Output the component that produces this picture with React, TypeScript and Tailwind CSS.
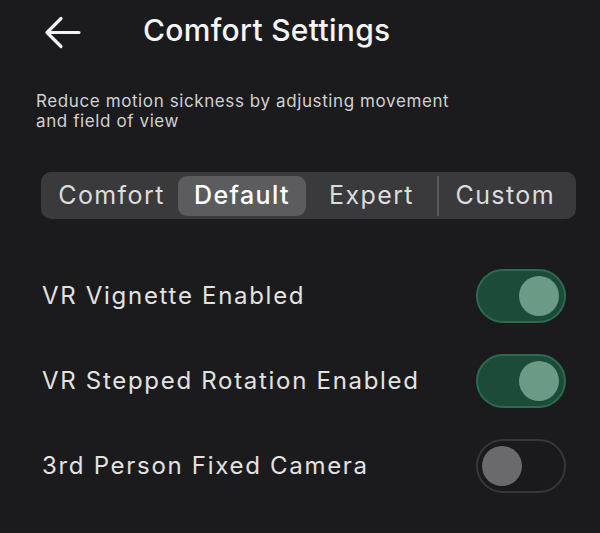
import React from "react";

function Toggle({ on }: { on: boolean }) {
  return (
    <div
      className={
        on
          ? "w-[90px] h-[54px] rounded-full bg-[#1c4c39] border-2 border-[#2e6a51] flex items-center justify-end pr-[5px]"
          : "w-[90px] h-[54px] rounded-full bg-[#1a1a1c] border-2 border-[#37373a] flex items-center justify-start pl-[4px]"
      }
    >
      <div
        className={
          on
            ? "w-[40px] h-[40px] rounded-full bg-[#6b9a86]"
            : "w-[40px] h-[40px] rounded-full bg-[#6a6a6c]"
        }
      />
    </div>
  );
}

function Row({ label, on }: { label: string; on: boolean }) {
  return (
    <div className="flex items-center justify-between h-[85px] pl-[42px] pr-[34px]">
      <span className="text-[24px] text-[#e2e2e2] tracking-[1.7px]">{label}</span>
      <Toggle on={on} />
    </div>
  );
}

export default function App() {
  return (
    <div
      className="w-[600px] h-[533px] bg-[#1b1b1d] text-white overflow-hidden"
      style={{ fontFamily: "Inter, 'Open Sans', sans-serif" }}
    >
      <div className="flex items-center h-[64px] pl-[44px]">
        <svg width="37" height="33" viewBox="0 0 37 33" fill="none">
          <path
            d="M35 16.5H3M17 2.5L3 16.5L17 30.5"
            stroke="#f2f2f2"
            strokeWidth="3.2"
            strokeLinecap="round"
            strokeLinejoin="round"
          />
        </svg>
        <h1 className="ml-[62px] mb-[4px] text-[30px] font-medium text-[#f5f5f5] tracking-[0.3px]">
          Comfort Settings
        </h1>
      </div>
      <p className="mt-[27px] ml-[36px] w-[430px] text-[17px] leading-[20px] tracking-[0.6px] text-[#d0d0d0]">
        Reduce motion sickness by adjusting movement and field of view
      </p>
      <div className="mt-[41px] ml-[41px] w-[535px] h-[47px] rounded-[10px] bg-[#3a3a3c] flex items-center px-[4px] text-[25px] tracking-[1.4px] text-[#dcdcdc]">
        <div className="w-[133px] h-[40px] flex items-center justify-center">Comfort</div>
        <div className="w-[128px] h-[40px] rounded-[9px] bg-[#5c5c5e] flex items-center justify-center font-medium text-white">
          Default
        </div>
        <div className="w-[131px] h-[40px] flex items-center justify-center">Expert</div>
        <div className="w-[1.5px] h-[40px] bg-[#5a5a5c]" />
        <div className="flex-1 h-[40px] flex items-center justify-center">Custom</div>
      </div>
      <div className="mt-[34px]">
        <Row label="VR Vignette Enabled" on={true} />
        <Row label="VR Stepped Rotation Enabled" on={true} />
        <Row label="3rd Person Fixed Camera" on={false} />
      </div>
    </div>
  );
}
